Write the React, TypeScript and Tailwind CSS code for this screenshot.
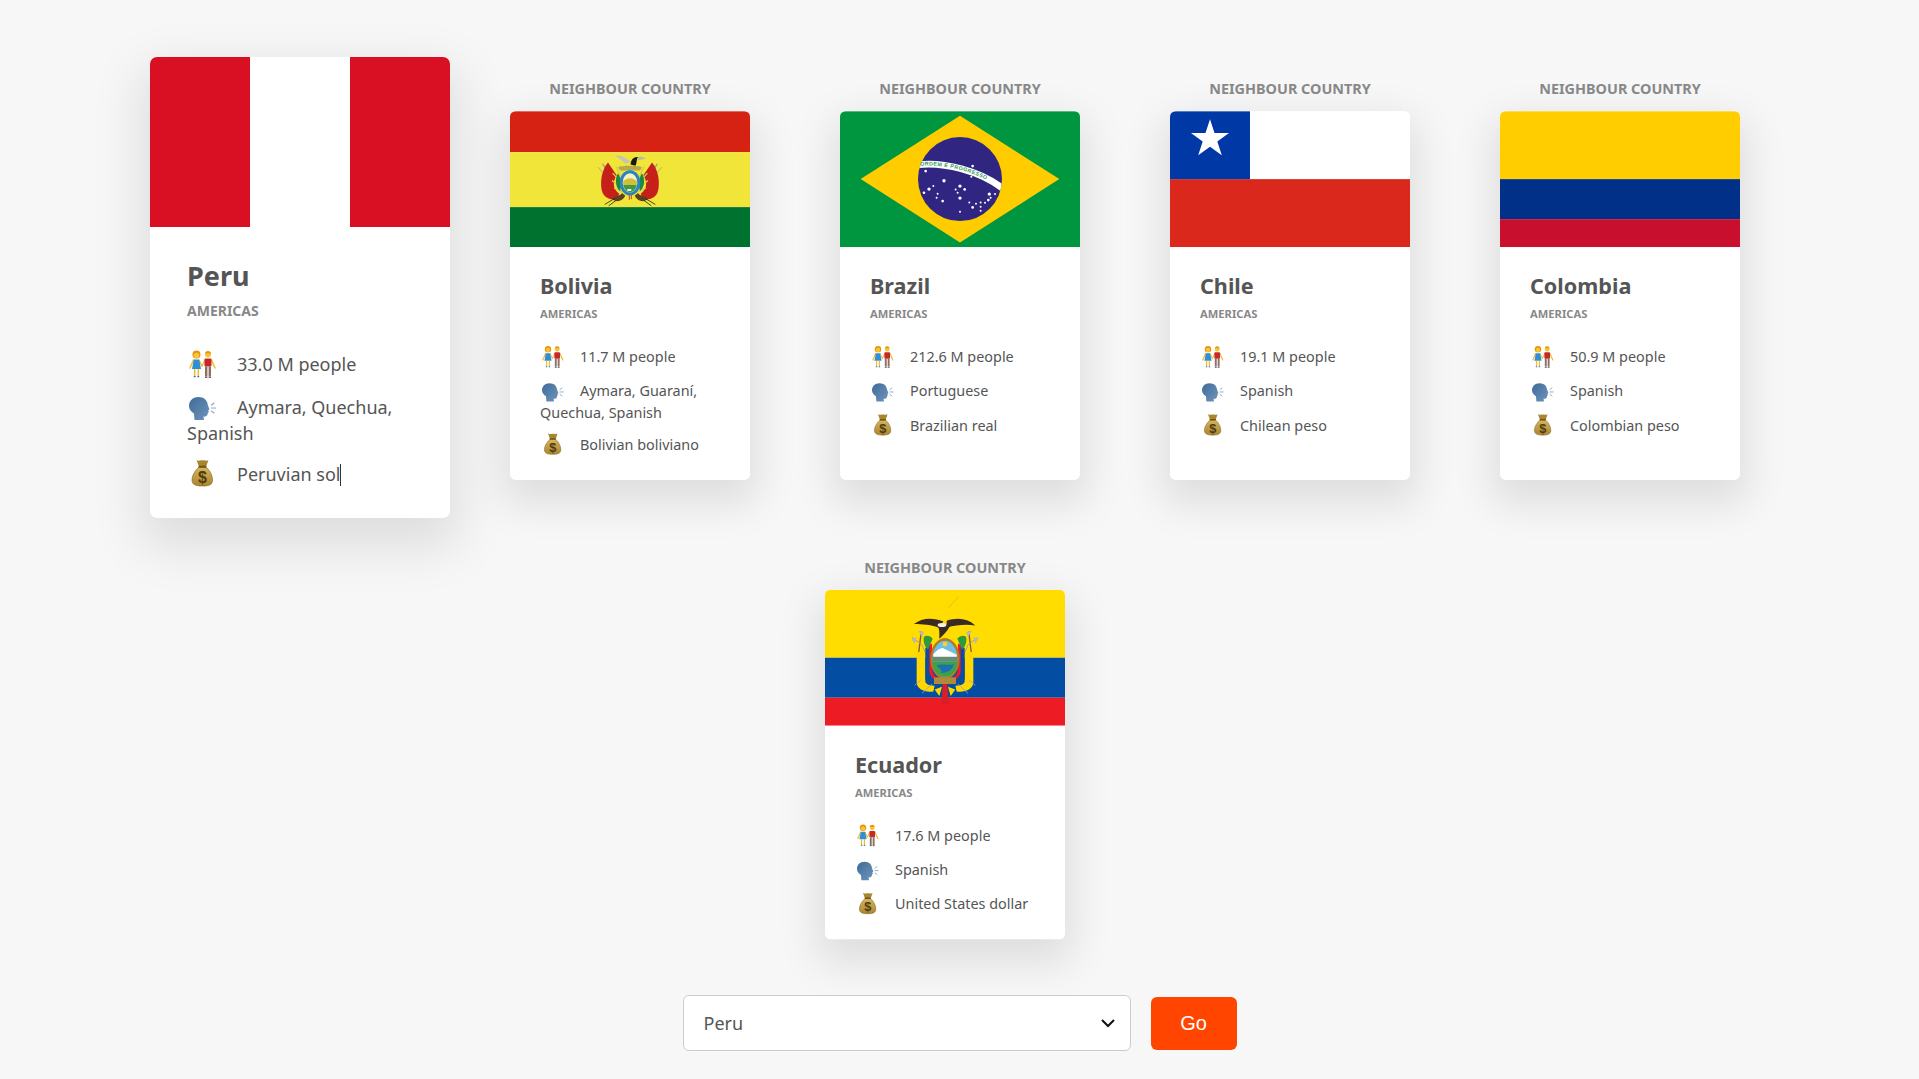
import type { ReactNode } from "react";

const brazilStars = [
  [287, 213, 4], [428, 198, 4], [424, 230, 3], [342, 242, 5], [310, 258, 3], [297, 267, 5], [282, 278, 4],
  [323, 281, 3], [320, 293, 3], [338, 303, 4], [390, 258, 5], [377, 268, 3], [404, 268, 4], [383, 278, 3],
  [390, 294, 5], [418, 307, 3], [438, 311, 3], [452, 307, 3], [465, 308, 3], [475, 300, 4], [482, 293, 3],
  [478, 282, 5], [495, 282, 3], [428, 322, 4], [452, 320, 3], [452, 332, 3], [390, 335, 3],
];

function FlagSvg({ children }: { children: ReactNode }) {
  return (
    <svg viewBox="0 0 240 136" preserveAspectRatio="none" className="block w-[300px] h-[170px] rounded-t-[7px]">
      {children}
    </svg>
  );
}

function Peru() {
  return (
    <FlagSvg>
      <rect width="240" height="136" fill="#d91023" />
      <rect x="80" width="80" height="136" fill="#ffffff" />
    </FlagSvg>
  );
}

function BoliviaSide() {
  return (
    <g>
      <path d="M38 56 L66 100" stroke="#9a9a8c" strokeWidth="4" />
      <path d="M24 66 L58 104" stroke="#a8a890" strokeWidth="3" />
      <path d="M54 52 C34 74 28 118 38 144 C46 160 64 166 80 162 L88 146 C70 132 66 112 80 90 Z" fill="#c5201a" />
      <path d="M78 64 L98 108 M68 84 L98 118 M66 106 L96 130 M72 128 L96 140" stroke="#d9cf4a" strokeWidth="4" />
      <path d="M84 84 C74 100 76 126 90 138 C95 120 95 102 84 84 Z" fill="#1b8a3e" />
      <path d="M66 162 C76 150 92 154 96 144 L106 152 C98 168 80 174 66 162 Z" fill="#5c4020" />
      <path d="M44 178 L74 160 M56 182 L78 166" stroke="#2a2a1c" strokeWidth="2.5" />
    </g>
  );
}

function Bolivia() {
  return (
    <FlagSvg>
      <rect width="240" height="41" fill="#d52212" />
      <rect y="41" width="240" height="55" fill="#f1e53a" />
      <rect y="96" width="240" height="40" fill="#00722f" />
      <g transform="translate(80 34) scale(0.3333)">
        <BoliviaSide />
        <g transform="translate(240 0) scale(-1 1)">
          <BoliviaSide />
        </g>
        <path d="M76 32 C92 28 108 38 122 50 L106 56 C96 44 86 40 76 32 Z" fill="#c4c4b4" />
        <path d="M122 58 C122 44 132 34 144 36 C138 44 142 52 136 62 Z" fill="#1a1a14" />
        <path d="M144 36 C152 34 160 36 168 40 C158 42 150 44 144 46 Z" fill="#b8b8a8" />
        <path d="M84 66 C96 60 144 60 156 66 L150 76 L90 76 Z" fill="#b6a84c" />
        <ellipse cx="120" cy="113" rx="31" ry="38" fill="#2b83c0" />
        <ellipse cx="120" cy="113" rx="22" ry="29" fill="#f4f2c8" />
        <path d="M99 110 C108 96 132 96 141 110 L140 122 L100 122 Z" fill="#cfc03a" />
        <path d="M100 120 L140 120 C138 134 128 142 120 142 C112 142 102 134 100 120 Z" fill="#3f9a45" />
        <path d="M112 132 h12 v6 h-12 Z" fill="#f2f2f2" />
        <path d="M118 150 v14 M124 150 v12" stroke="#d53a2a" strokeWidth="3" />
      </g>
    </FlagSvg>
  );
}

function Brazil() {
  return (
    <FlagSvg>
      <rect width="240" height="136" fill="#009640" />
      <g transform="translate(-10 -11) scale(0.3333)">
        <polygon points="92,237 390,47 688,237 390,427" fill="#ffcc00" />
        <circle cx="390" cy="237" r="126" fill="#302681" />
        <clipPath id="globe">
          <circle cx="390" cy="237" r="126" />
        </clipPath>
        <g clipPath="url(#globe)">
          <path id="band" d="M262 194 C340 184 450 212 520 266" fill="none" stroke="#ffffff" strokeWidth="20" />
        </g>
        <text fontFamily="'Liberation Sans', sans-serif" fontSize="16" fontWeight="700" fill="#2f9a5a" letterSpacing="1.5">
          <textPath href="#band" startOffset="3%" dominantBaseline="middle">ORDEM E PROGRESSO</textPath>
        </text>
        {brazilStars.map(([x, y, r]) => (
          <circle key={`${x}-${y}`} cx={x} cy={y} r={r} fill="#ffffff" />
        ))}
      </g>
    </FlagSvg>
  );
}

function Chile() {
  return (
    <FlagSvg>
      <rect width="240" height="68" fill="#ffffff" />
      <rect y="68" width="240" height="68" fill="#da291c" />
      <rect width="80" height="68" fill="#0039a6" />
      <polygon
        points="40,8 44.5,21.8 59,21.8 47.3,30.4 51.8,44.2 40,35.6 28.2,44.2 32.7,30.4 21,21.8 35.5,21.8"
        fill="#ffffff"
      />
    </FlagSvg>
  );
}

function Colombia() {
  return (
    <FlagSvg>
      <rect width="240" height="68" fill="#ffcd00" />
      <rect y="68" width="240" height="40" fill="#003087" />
      <rect y="108" width="240" height="28" fill="#c8102e" />
    </FlagSvg>
  );
}

function EcuadorSide() {
  return (
    <g>
      <path d="M64 110 L54 190" stroke="#8a5a3a" strokeWidth="4" />
      <path d="M36 128 L66 150 L80 184" stroke="#a0a0a0" strokeWidth="3" fill="none" />
      <path d="M34 130 L50 128 L44 148 Z" fill="#b8b8b0" />
      <path d="M54 108 L72 112 L66 126 Z" fill="#b8b8b0" />
      <path d="M50 172 L76 172 L76 262 C82 272 92 274 104 272 L100 290 C76 294 50 284 50 262 Z" fill="#ffd800" />
      <path d="M76 160 L90 150 L92 236 C94 246 100 252 108 256 L104 272 C90 272 78 264 76 250 Z" fill="#0a4ea2" />
      <path d="M88 150 L96 146 L96 226 C98 238 104 246 114 250 L108 258 C98 252 90 244 88 232 Z" fill="#ed1c24" />
      <path d="M72 126 C80 120 92 124 98 132 L84 164 C74 156 68 140 72 126 Z" fill="#2f9a3a" />
      <path d="M44 272 L62 256 M66 296 L96 268" stroke="#9aa0b0" strokeWidth="2.5" />
    </g>
  );
}

function Ecuador() {
  return (
    <FlagSvg>
      <rect width="240" height="68" fill="#ffdd00" />
      <rect y="68" width="240" height="40" fill="#034ea2" />
      <rect y="108" width="240" height="28" fill="#ed1c24" />
      <g transform="translate(75 5) scale(0.3333)">
        <path d="M145 40 L175 6" stroke="#d8b020" strokeWidth="2" />
        <EcuadorSide />
        <g transform="translate(270 0) scale(-1 1)">
          <EcuadorSide />
        </g>
        <path d="M42 88 C66 68 100 68 130 80 L118 100 C96 90 66 88 42 88 Z" fill="#3a2a22" />
        <path d="M226 92 C200 70 172 68 140 78 L140 98 C170 90 200 88 226 92 Z" fill="#3a2a22" />
        <path d="M112 92 L152 88 C146 106 132 120 118 132 C118 116 120 104 112 92 Z" fill="#3a2a22" />
        <ellipse cx="126" cy="91" rx="13" ry="6" fill="#f2efe6" />
        <ellipse cx="135" cy="192" rx="44" ry="62" fill="#b07a28" />
        <ellipse cx="135" cy="192" rx="37" ry="54" fill="#6fc0e0" />
        <path d="M100 178 C112 166 120 160 128 160 C140 166 152 172 170 180 L170 188 L100 188 Z" fill="#ffffff" />
        <path d="M98 186 L172 186 L172 200 L98 200 Z" fill="#6a8a78" />
        <path d="M98 200 L172 200 C172 226 154 246 135 246 C116 246 98 226 98 200 Z" fill="#3aa24a" />
        <path d="M110 212 C130 206 150 214 162 208 C156 228 140 236 122 234 C130 226 118 222 110 212 Z" fill="#1f6fb0" />
        <circle cx="135" cy="148" r="7" fill="#ffcf30" />
        <rect x="102" y="248" width="66" height="20" fill="#b08a3c" />
        <path d="M128 268 L142 268 L146 330 L124 330 Z" fill="#d81e28" />
        <path d="M104 284 L126 276 L118 304 Z M166 284 L144 276 L152 304 Z" fill="#ffd800" />
      </g>
    </FlagSvg>
  );
}

// emoji drawn by hand: the installed emoji font has a newer, different look
function CoupleIcon() {
  return (
    <svg viewBox="0 0 30 33" className="inline-block w-[30px] h-[33.1px] mr-5 align-[-7.4px]">
      <path d="M6.5 15 L3 23 M24.5 15 L28 23" stroke="#f5b82e" strokeWidth="1.5" strokeLinecap="round" />
      <path d="M12 15 L15 21 L18 15" stroke="#f5b82e" strokeWidth="1.3" fill="none" />
      <circle cx="9.5" cy="9.5" r="4" fill="#e8950f" />
      <circle cx="9.5" cy="10.5" r="2.7" fill="#fbc531" />
      <path d="M6.8 14.5 h5.4 l1.8 9.5 h-9 Z" fill="#2f8fd6" />
      <path d="M7.7 24 V31 M11.3 24 V31" stroke="#f5b82e" strokeWidth="1.5" />
      <path d="M6.8 31.5 h1.8 M10.4 31.5 h1.8" stroke="#2f6fa6" strokeWidth="1.2" />
      <circle cx="21" cy="9.5" r="3" fill="#fbc531" />
      <path d="M18 8.5 C18 5 24 5 24 8.5 Z" fill="#e8950f" />
      <rect x="17.5" y="13.5" width="7" height="8" rx="1" fill="#c62828" />
      <path d="M19.2 21.5 V31 M22.8 21.5 V31" stroke="#8d6e63" strokeWidth="2.4" />
      <path d="M18 32 h2.4 M21.6 32 h2.4" stroke="#3e2f28" strokeWidth="1.2" />
    </svg>
  );
}

function HeadIcon() {
  return (
    <svg viewBox="0 0 30 33" className="inline-block w-[30px] h-[33.1px] mr-5 align-[-7.4px]">
      <defs>
        <linearGradient id="headFill" x1="0" y1="0" x2="1" y2="1">
          <stop offset="0" stopColor="#3f6b99" />
          <stop offset="1" stopColor="#6f95bb" />
        </linearGradient>
      </defs>
      <path
        d="M11.5 9 C5.5 9 2 13 2 18 C2 21.5 4.5 24 7 25.5 L7.5 32 L17 32 L16.5 28.5 C19 29 21 27.5 20.8 25 L22 23.8 L21 22.5 L22.5 21.5 L20.8 17 C20.5 12.5 17 9 11.5 9 Z"
        fill="url(#headFill)"
      />
      <path d="M24.5 17 L27 15 M24.5 20 L28.5 20 M24.5 23 L27 25" stroke="#86a6c4" strokeWidth="1.1" strokeLinecap="round" />
    </svg>
  );
}

function BagIcon() {
  return (
    <svg viewBox="0 0 30 33" className="inline-block w-[30px] h-[33.1px] mr-5 align-[-7.4px]">
      <defs>
        <linearGradient id="bagFill" x1="0" y1="0" x2="0" y2="1">
          <stop offset="0" stopColor="#d8b65a" />
          <stop offset="1" stopColor="#a98432" />
        </linearGradient>
      </defs>
      <path d="M9.5 5 C11.5 6.5 13.5 4.5 15.5 5.5 C17.5 4.5 19.5 6.5 21.5 5 L19 12 L12 12 Z" fill="#a8862e" />
      <path
        d="M12 12 C7.5 16 5 21 5 25 C5 29.5 8.5 31 15.5 31 C22.5 31 25.5 29.5 25.5 25 C25.5 21 23.5 16 19 12 Z"
        fill="url(#bagFill)"
        stroke="#7a5f1c"
        strokeWidth="0.6"
      />
      <rect x="11.5" y="10.8" width="8" height="1.8" rx="0.9" fill="#6e5418" />
      <text x="15.5" y="28" textAnchor="middle" fontFamily="'Liberation Sans', sans-serif" fontSize="16" fontWeight="700" fill="#4f3c10">
        $
      </text>
    </svg>
  );
}

type CardProps = {
  name: string;
  people: string;
  lang: string;
  money: string;
  flag: ReactNode;
  neighbour?: boolean;
  caret?: boolean;
};

function Card({ name, people, lang, money, flag, neighbour, caret }: CardProps) {
  return (
    <article
      className={
        neighbour
          ? "relative w-[300px] bg-white rounded-[7px] shadow-[0_20px_50px_10px_rgba(0,0,0,0.1)] text-[18px] mr-[30px] scale-80 translate-y-2"
          : "relative w-[300px] bg-white rounded-[7px] shadow-[0_20px_50px_10px_rgba(0,0,0,0.1)] text-[18px] mx-[30px]"
      }
    >
      {neighbour && (
        <div className="absolute -top-10 w-full text-center text-[18px] font-bold uppercase text-[#888]">
          Neighbour country
        </div>
      )}
      {flag}
      <div className="pt-[30px] pr-[37.5px] pb-[30px] pl-[37.5px]">
        <h3 className="text-[27px] font-bold mb-[7px]">{name}</h3>
        <h4 className="text-[14px] font-bold uppercase text-[#888] mb-[25px]">Americas</h4>
        <p className="mb-[10px]">
          <CoupleIcon />
          {people}
        </p>
        <p className="mb-[10px]">
          <HeadIcon />
          {lang}
        </p>
        <p>
          <BagIcon />
          {money}
          {caret && <span className="inline-block w-px h-[22px] bg-[#333] align-[-5px]" />}
        </p>
      </div>
    </article>
  );
}

export default function App() {
  return (
    <div className="min-h-[1079px] bg-[#f7f7f7] text-[#555] leading-[normal] font-['Noto_Sans',sans-serif] flex flex-col items-center">
      <main className="w-full flex flex-wrap justify-center gap-y-5 pt-[57px]">
        <Card name="Peru" people="33.0 M people" lang="Aymara, Quechua, Spanish" money="Peruvian sol" flag={<Peru />} caret />
        <Card neighbour name="Bolivia" people="11.7 M people" lang="Aymara, Guaraní, Quechua, Spanish" money="Bolivian boliviano" flag={<Bolivia />} />
        <Card neighbour name="Brazil" people="212.6 M people" lang="Portuguese" money="Brazilian real" flag={<Brazil />} />
        <Card neighbour name="Chile" people="19.1 M people" lang="Spanish" money="Chilean peso" flag={<Chile />} />
        <Card neighbour name="Colombia" people="50.9 M people" lang="Spanish" money="Colombian peso" flag={<Colombia />} />
        <Card neighbour name="Ecuador" people="17.6 M people" lang="Spanish" money="United States dollar" flag={<Ecuador />} />
      </main>
      <form className="flex items-center gap-5 mt-[19px]">
        <div className="relative">
          <select className="block appearance-none w-[448px] h-[56px] pl-5 pr-10 bg-white border border-[#ccc] rounded-[6px] text-[18px] text-[#555]" defaultValue="Peru">
            <option>Peru</option>
          </select>
          <svg viewBox="0 0 16 16" className="absolute right-[15px] top-5 w-4 h-4 pointer-events-none" fill="none" stroke="#111" strokeWidth="2">
            <path d="M2 5 L8 11 L14 5" />
          </svg>
        </div>
        <button type="button" className="w-[86px] h-[53px] mt-[2px] bg-[#ff4500] rounded-[6px] text-white text-[20px] font-['Liberation_Sans',sans-serif]">
          Go
        </button>
      </form>
    </div>
  );
}
